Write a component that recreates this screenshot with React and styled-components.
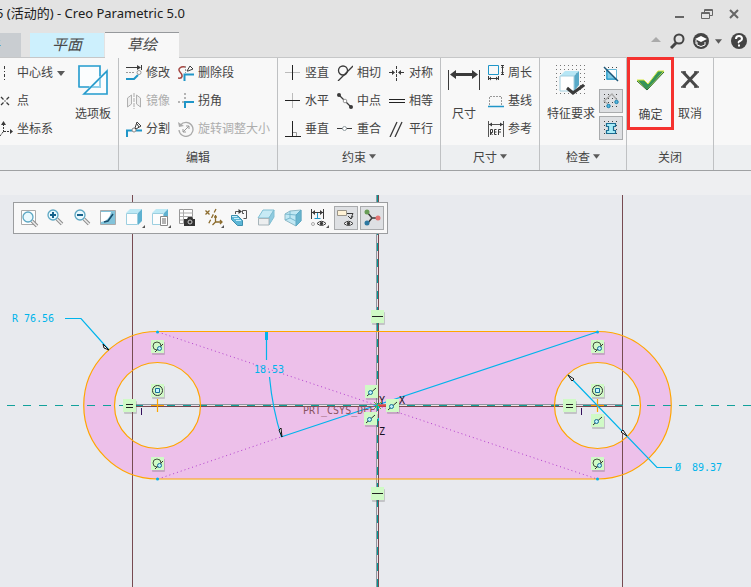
import React from "react";
import styled, { createGlobalStyle } from "styled-components";

const Global = createGlobalStyle`
  * { box-sizing: border-box; }
  body { margin: 0; overflow-x: hidden; background: #e8eaee; }
  body, button { font-family: "Noto Sans", "Noto Sans CJK SC", sans-serif; font-size: 12px; color: #444; }
  button { margin: 0; padding: 0; border: 0; background: none; cursor: pointer; }
  svg { display: block; flex: none; }
`;

const Page = styled.div`
  min-height: 100vh;
  display: flex;
  flex-direction: column;
  overflow: hidden;
`;
const Header = styled.header`
  background: #e3e3e3;
  border-bottom: 1px solid #c6c7c8;
`;
const TitleBar = styled.div`
  height: 28px;
  display: flex;
  align-items: center;
  justify-content: space-between;
  padding-right: 11px;
`;
const Title = styled.h1`
  margin: 0 0 0 -4px;
  font-size: 13px;
  line-height: 18px;
  padding-bottom: 2px;
  font-weight: 400;
  color: #202020;
  white-space: nowrap;
`;
const WindowButtons = styled.div`
  display: flex;
  gap: 15px;
`;
const TabBar = styled.div`
  height: 29px;
  display: flex;
  align-items: flex-end;
`;
const Tab = styled.button`
  width: 74px;
  height: 24px;
  padding-bottom: 3px;
  font-size: 15px;
  line-height: 20px;
  font-style: italic;
  color: #484848;
  background: #cdf0fd;
`;
const FileTab = styled(Tab)`
  width: 68px;
  margin-left: -47px;
  margin-right: 9px;
  font-size: 14px;
  font-style: normal;
  color: #2d80b5;
  background: #c9cdd1;
`;
const ActiveTab = styled(Tab)`
  width: 74px;
  height: 26px;
  margin-left: 1px;
  margin-bottom: -1px;
  border-top: 1px solid #96999c;
  background: #f8f8f8;
`;
const HeaderTools = styled.div`
  margin-left: auto;
  padding-right: 4px;
  height: 32px;
  display: flex;
  align-items: center;
`;
const ToolButton = styled.button`
  margin-left: ${(p) => p.$gap}px;
`;

const Ribbon = styled.div`
  display: flex;
  height: 113px;
  border-bottom: 1px solid #9fa1a3;
  background: #f8f8f8;
`;
const Group = styled.section`
  flex: ${(p) => (p.$width ? `0 0 ${p.$width}px` : "1 1 0")};
  display: flex;
  flex-direction: column;
  border-right: ${(p) => (p.$width ? "1px solid #bfc1c3" : "0")};
`;
const GroupBody = styled.div`
  flex: 1;
  display: flex;
  gap: ${(p) => p.$gap ?? 8}px;
  padding-top: 1px;
  padding-left: ${(p) => p.$pad ?? 7}px;
`;
const GroupLabel = styled.h2`
  margin: 0;
  height: 25px;
  padding-bottom: 2px;
  display: flex;
  align-items: center;
  justify-content: center;
  gap: 3px;
  font-size: 12px;
  font-weight: 400;
  background: #edeff1;
`;
const Column = styled.div`
  display: grid;
  grid-template-rows: repeat(3, 28px);
  justify-items: start;
`;
const SmallButton = styled.button`
  display: flex;
  align-items: center;
  gap: 4px;
  line-height: 18px;
  white-space: nowrap;
  color: ${(p) => (p.disabled ? "#adadad" : "#444")};
`;
const LargeButton = styled.button`
  height: 70px;
  display: flex;
  flex-direction: column;
  align-items: center;
  gap: 4px;
  line-height: 18px;
  white-space: nowrap;
`;
const LargeIcon = styled.span`
  height: 42px;
  display: flex;
  align-items: center;
`;
const ConfirmButton = styled(LargeButton)`
  width: 47px;
  height: 73px;
  border: 3px solid #f5322f;
  margin-top: -2px;
  position: relative;
  z-index: 1;
`;
const Toggle = styled.button`
  width: 24px;
  height: 24px;
  display: flex;
  align-items: center;
  justify-content: center;
  border: 1px solid ${(p) => (p["aria-pressed"] ? "#a9abad" : "transparent")};
  background: ${(p) => (p["aria-pressed"] ? "#dee0e3" : "transparent")};
`;
const ToggleColumn = styled.div`
  display: grid;
  grid-template-rows: repeat(3, 24px);
  row-gap: 3px;
  padding-top: 3px;
`;
const Strip = styled.div`
  height: 24px;
  background: #eeeff1;
`;
const Workspace = styled.main`
  flex: 1;
  position: relative;
  background: #e8eaee;
`;
const ViewToolbar = styled.div`
  position: absolute;
  top: 7px;
  left: 13px;
  width: 375px;
  height: 32px;
  padding: 0 3px;
  display: flex;
  align-items: center;
  justify-content: space-between;
  border: 1px solid #9b9d9f;
  background: #f8f8f8;
`;
const Drawing = styled.svg`
  width: 100%;
  height: auto;
  font-family: "DejaVu Sans Mono", monospace;
  font-size: 10px;
`;

const DK = "#3a3a3a";
const BL = "#2096c8";

const Arrow = ({ w = 7 }) => (
  <svg width={w} height="5" viewBox="0 0 8 5"><path d="M0 0h8L4 5z" fill="#5a5a5a" /></svg>
);
const Icon = ({ w = 16, h = 16, children }) => (
  <svg width={w} height={h} viewBox={`0 0 ${w} ${h}`} fill="none" stroke={DK} aria-hidden="true">{children}</svg>
);

const Dots = () => [0, 4, 8, 12].map((y) => <path key={y} d={`M1 ${y + 1.5}h14`} strokeDasharray="1 3" stroke="#444" />);

const icons = {
  centerline: <Icon w={13}><path d="M4.500 1v14" strokeDasharray="3 2 1 2" /></Icon>,
  point: <Icon w={13}><path d="M1 4l2.500 2.500M9 4L6.500 6.500M1 12l2.500-2.500M9 12L6.500 9.500" strokeWidth="1.300" /><path d="M4.500 8h1" strokeWidth="1.500" /></Icon>,
  csys: <Icon w={13}><path d="M3.500 11V2M4 10.500h8M3 11l-3 4" strokeDasharray="2 1" /><path d="M1 4l2.500-4L6 4zM10 8l3 2.500-3 2.500z" fill={DK} stroke="none" /></Icon>,
  modify: <Icon><path d="M0 2.500h13M15.500 0v5" /><path d="M11 0l4 2.500L11 5z" fill={DK} stroke="none" /><path d="M0 7.500h8" stroke="#999" strokeDasharray="2 1" /><path d="M0 14h8l4-4" stroke={BL} strokeWidth="2" /><circle cx="13" cy="7.500" r="2" stroke="#999" /></Icon>,
  mirror: <Icon><path d="M1.500 5l4-3v9l-4 3zM14.500 5l-4-3v9l4 3z" fill="#eee" stroke="#b0b0b0" /><path d="M8 0v16" stroke="#aaa" strokeDasharray="4 1" /></Icon>,
  divide: <Icon><path d="M1 16V9.500h5M10 9.500h6" stroke={BL} strokeWidth="2" /><circle cx="8" cy="9" r="2" stroke="#888" /><path d="M9 7l2-6 4 4-5 3zM11 3l2 3" fill="#fff" /></Icon>,
  deleteSeg: <Icon><path d="M0 13c5 1 5-3 2-6S3 1 7 2" stroke="#a34540" strokeWidth="1.500" /><path d="M6.500 16v-6.500H16" stroke={BL} strokeWidth="2" /><path d="M7.500 1v7" stroke="#999" strokeDasharray="2 1" /><path d="M9 6l3-5 3 3-5 2z" fill="#fff" /></Icon>,
  corner: <Icon><path d="M7 0v8M0 9h6" stroke="#b4b4b4" strokeWidth="2" strokeDasharray="2 2" /><path d="M7 15V9H16" stroke={BL} strokeWidth="2" /></Icon>,
  rotate: <Icon><path d="M2.500 4A7 7 0 1 1 1 9" stroke="#aaa" strokeWidth="1.300" /><path d="M0 1l1 5 5-1z" fill="#aaa" stroke="none" /><path d="M5 11l6-6M8 5h3v3M5 8v3h3" stroke="#999" /></Icon>,
  vertical: <Icon><path d="M0 7.500h15" stroke="#bbb" /><path d="M7.500 0v15" stroke="#222" /></Icon>,
  horizontal: <Icon><path d="M7.500 0v15" stroke="#bbb" /><path d="M0 7.500h15" stroke="#222" /></Icon>,
  perpendicular: <Icon><path d="M8 11.500h3.500V15" stroke="#999" /><path d="M7.500 0v15M0 15.500h16" stroke="#222" /></Icon>,
  tangent: <Icon><circle cx="6" cy="5.500" r="4.500" strokeWidth="1.300" /><path d="M1 16L16 1" strokeWidth="1.300" /></Icon>,
  midpoint: <Icon><path d="M2 2l12 12" strokeWidth="1.300" /><circle cx="2" cy="2" r="2" fill={DK} stroke="none" /><circle cx="14" cy="14" r="2" fill={DK} stroke="none" /><circle cx="8" cy="8" r="1.800" fill="#fff" stroke="#999" /></Icon>,
  coincident: <Icon><path d="M0 7.500h15" /><circle cx="7.500" cy="7.500" r="2" fill="#fff" stroke="#909ba0" /></Icon>,
  symmetric: <Icon><path d="M7.500 1v15" strokeDasharray="3 1" /><path d="M0 7.500h5M10 7.500h5" /><path d="M3 5l3 2.500L3 10zM12 5L9 7.500l3 2.500z" fill={DK} stroke="none" /></Icon>,
  equal: <Icon><path d="M0 6.500h16M0 9.500h16" stroke="#222" /></Icon>,
  parallel: <Icon><path d="M1 16L8 1M6 16l7-15" strokeWidth="1.300" /></Icon>,
  perimeter: <Icon><path d="M.500.500h10v9H.500z" stroke={BL} /><path d="M1 13.500h9M.500 11v4M10.500 11v4M14.500 1v8M13 .500h3M13 9.500h3" /><path d="M1 13.500l2-2v4zM10 13.500l-2-2v4zM14.500 1l-1.500 2h3zM14.500 9l-1.500-2h3z" fill={DK} stroke="none" /></Icon>,
  baseline: <Icon><path d="M1.500 12V3.500h12V12" stroke="#999" strokeDasharray="2 1" /><path d="M0 13.500h16" stroke={BL} strokeWidth="1.500" /></Icon>,
  reference: <Icon><path d="M.500 0v16M15.500 0v16M1 3.500h14" stroke="#555" /><path d="M1 3.500l3-2v4zM15 3.500l-3-2v4z" fill={DK} stroke="none" /><path d="M2.500 14V8.500h2v3h-2l2 2.500M8.500 8.500h-2v5h2M6.500 11h2M13 8.500h-2.500V14M10.500 11h2.500" /></Icon>,
  palette: <Icon w={30} h={30}><path d="M1 1h21v21H1zM29 6v23H6z" fill="#fbfdfe" stroke="#8fd0ea" strokeWidth="2" /><path d="M1 22V1h21v10M11 22H1M29 6v23H6z" stroke={BL} strokeWidth="1.200" /></Icon>,
  dimension: <Icon w={32} h={22}><path d="M.500 1v20M31.500 1v20" /><path d="M5 5.500h22" strokeWidth="3" /><path d="M2 5.500L8 1v9zM30 5.500L24 1v9z" fill={DK} stroke="none" /></Icon>,
  feature: (
    <Icon w={30} h={30}>
      {[0, 4, 8, 12, 16, 20, 24, 28].map((y) => <path key={y} d={`M0 ${y + 0.5}h30`} strokeDasharray="1 3" stroke="#777" />)}
      <path d="M4 11l5-5h14l-5 5z" fill="#b6e6f5" stroke="none" /><path d="M18 11l5-5v14l-5 6z" fill="#58a9c7" stroke="none" />
      <path d="M4 11h14v15H4z" fill="#fff" stroke="#a3cfdf" /><path d="M11 23l6 5 11-8" strokeWidth="3" />
    </Icon>
  ),
  check: <Icon w={30} h={22}><path d="M1 10h7l4 4L22 1h6L11 20z" fill="#35945a" stroke="#d6e840" /><path d="M1 11l10 9L28 2" stroke="#266b3e" /></Icon>,
  cancel: <Icon w={20} h={18}><path d="M3 1l14 15M17 1L3 16" strokeWidth="3" stroke="#484848" /><path d="M1 1h5M14 1h5M1 16h5M14 16h5" strokeWidth="1.500" stroke="#484848" /></Icon>,
  shade: <Icon><Dots /><path d="M3.500 3.500h10v10h-10z" fill="#fff" stroke="#68b8d6" /><path d="M4 4v9h9z" fill="#7ecbe5" stroke={BL} /><path d="M1 1l14 14" stroke="#1d5577" strokeWidth="1.500" /></Icon>,
  openEnds: <Icon><Dots /><path d="M5 11L1 8l8-7 5 6" stroke="#aaa" strokeWidth="1.300" /><circle cx="5.500" cy="13" r="1.700" fill="#55b8e0" stroke="#1d7faa" /><circle cx="13.500" cy="9" r="1.700" fill="#55b8e0" stroke="#1d7faa" /></Icon>,
  overlap: <Icon><Dots /><path d="M3.500 3.500h9v3h-2v4h2v3h-9v-3h2v-4h-2z" fill="#a7ebf7" stroke="#1b6b91" strokeWidth="1.200" /></Icon>,
};

const Lens = ({ x = 7, y = 7 }) => (
  <>
    <path d={`M${x + 4} ${y + 4}l5 5`} stroke="#8c8c8c" strokeWidth="3.500" /><path d={`M${x + 4} ${y + 4}l5 5`} stroke="#eee" strokeWidth="1.500" />
    <circle cx={x} cy={y} r="5" fill="#eaf9fe" stroke="#5da7c3" strokeWidth="1.300" />
  </>
);
const Cube = () => (
  <><path d="M1 5l4-4h12l-4 4z" fill="#bde9f5" stroke="none" /><path d="M13 5l4-4v12l-4 4z" fill="#5eb1d0" stroke="none" /><path d="M1.500 5.500h11v11h-11z" fill="#fdfdfd" stroke="#9ccfe0" /></>
);
const Corner = () => <path d="M20 17v3h-3z" fill="#555" stroke="none" />;
const Eye = () => (<><path d="M8 15.500q4.500-4.500 9 0q-4.500 4-9 0z" fill="#fff" /><circle cx="12.500" cy="15.500" r="1.700" fill={DK} stroke="none" /></>);

const viewTools = [
  ["重新调整", <><path d="M2.500 2.500h14v14h-14z" stroke="#aaa" fill="#fff" /><Lens x={9} y={9} /></>],
  ["放大", <><Lens x={8} /><path d="M5 7h6M8 4v6" stroke="#17628b" strokeWidth="2" /></>],
  ["缩小", <><Lens x={8} /><path d="M5 7h6" stroke="#17628b" strokeWidth="2" /></>],
  ["重画", <><path d="M2.500 2.500h15v14h-15z" fill="#82c3da" stroke="#aaa" /><path d="M3 4h10q-1 6-6 9l-4 1z" fill="#fff" stroke="none" /><path d="M15 6l-5 7-4 1" stroke="#174e6c" strokeWidth="1.500" /></>],
  ["显示样式", <><Cube /><Corner /></>],
  ["已保存方向", <><Cube /><path d="M9.500 8.500h7v9h-7z" fill="#fff" stroke="#888" /><path d="M11 11h4M11 13h4M11 15h4" stroke="#666" /><Corner /></>],
  ["视图管理器", <><path d="M2.500 1.500h13v14h-13z" fill="#fff" stroke="#999" /><path d="M3 5h13M3 8.500h13M3 12h13M6.500 1v15" stroke="#aaa" /><path d="M7 11h3l1-2h4l1 2h2v7H7z" fill="#333" stroke="none" /><circle cx="13" cy="14" r="2" stroke="#ccc" /></>],
  ["基准显示过滤器", <><g stroke="#8b6b2c" strokeWidth="1.300"><path d="M1.500 2.500l4 4M5.500 2.500l-4 4" /><path d="M12 1L4 17" strokeDasharray="4 2" /><path d="M11.500 7v7h6M11.500 14l-3 3M10 9h3M16 12l2 2-2 2" /></g><Corner /></>],
  ["注释方向", <><path d="M5.500 6V3.500h4M12.500 2.500h4v8h-3M12.500 2.500v3h1.500" stroke="#555" /><path d="M8.500 1l3.500 2.500L8.500 6z" fill={DK} stroke="none" /><path d="M1.500 7.500h6l5 5v5h-5l-6-6z" fill="#5db6d6" stroke="#3c8fae" /><path d="M2 8.500h5M4 10.500h5M6 12.500h5" stroke="#c9f0fc" /></>],
  ["剖面", <><path d="M2 10l5-8h11l-5 8z" fill="#c7eaf5" stroke="#80bfd3" /><path d="M13 10l5-8v7l-5 8z" fill="#8fcbe0" stroke="#80bfd3" /><path d="M2.500 10.500h10.500v6.500H2.500z" fill="#eceeef" stroke="#a8b5ba" /></>],
  ["透视图", <><path d="M2 6l5-3 11-1v11l-5 5-11-6z" fill="#c1e8f4" stroke="#90b9c6" /><path d="M13 7l5-5v11l-5 5z" fill="#68b5cf" stroke="#5eaac5" /><path d="M2 6l11 1M7 3v7l-5 2M7 10l6 3" stroke="#79b9cf" /></>],
  ["尺寸显示", <><path d="M2.500 1v10M14.500 1v10M3 4.500h11" /><path d="M3 4.500L6 2v5zM14 4.500L11 2v5z" fill={DK} stroke="none" /><path d="M8.500 5v5M5.500 10.500h6" stroke={BL} /><Eye /><circle cx="4" cy="16" r="1.500" stroke="#aaa" /><Corner /></>],
  ["注释显示", <><path d="M1.500 2.500h9v5h-9z" fill="#fff2d5" stroke="#9a958a" /><path d="M11 5.500h6L15 10M12 8l3 3 2-3" /><Eye /></>, true],
  ["旋转中心", <><path d="M5 4l5 6-5 6M10 10h6" strokeWidth="1.500" /><circle cx="5" cy="4" r="2.500" fill="#689c55" stroke="none" /><circle cx="5" cy="15" r="2.500" fill="#2d78a1" stroke="none" /><circle cx="16" cy="10" r="2.500" fill="#e47372" stroke="none" /></>, true],
];

const Cmd = ({ icon, children, arrow, disabled }) => (
  <SmallButton type="button" disabled={disabled}>{icons[icon]}<span>{children}</span>{arrow && <Arrow w={8} />}</SmallButton>
);
const Big = ({ icon, children, as: Button = LargeButton }) => (
  <Button type="button"><LargeIcon>{icons[icon]}</LargeIcon><span>{children}</span></Button>
);
const RibbonGroup = ({ width, pad, gap, label, menu, children }) => (
  <Group $width={width}>
    <GroupBody $pad={pad} $gap={gap}>{children}</GroupBody>
    <GroupLabel>{label}{menu && <Arrow />}</GroupLabel>
  </Group>
);

const ORANGE = "#ffa500";
const CYAN = "#00b4eb";
const PURPLE = "#b23fce";
const BROWN = "#774b51";
const OUTLINE = "M157.500 331.500H597.500a73.500 73.500 0 0 1 0 147.500H157.500a73.500 73.500 0 0 1 0-147.500z";

const marks = {
  line: <path d="M1 6.500h11" stroke="#222" shapeRendering="crispEdges" />,
  equal: <path d="M3 5.500h7M3 8.500h7" stroke="#222" />,
  tangent: <><circle cx="6" cy="6" r="4" stroke="#44543e" /><path d="M4 12l8-8" stroke="#333" /><circle cx="8.500" cy="8.500" r="2" fill="#bdeefa" stroke="#176f97" /></>,
  concentric: <><circle cx="6.500" cy="6.500" r="5" stroke="#333" /><path d="M4.500 4.500h4v4h-4z" fill="#c5f3ff" stroke="#176f97" /></>,
  mid: <><path d="M2 11l9-8" stroke="#333" /><circle cx="5.500" cy="7.500" r="2" fill="#bdeefa" stroke="#176f97" /></>,
};
const badges = [
  [371, 310, "line"], [371, 487, "line"], [151, 340, "tangent"], [151, 457, "tangent"], [591, 340, "tangent"], [591, 457, "tangent"],
  [151, 384, "concentric"], [591, 384, "concentric"], [123, 399, "equal"], [563, 399, "equal"],
  [365, 385, "mid"], [386, 399, "mid"], [364, 412, "mid"], [591, 414, "mid"],
];

function Sketch() {
  return (
    <Drawing viewBox="0 195 751 392" fill="none" role="img" aria-label="草绘">
      <path d={OUTLINE} fill="#edc0ea" />
      <circle cx="157.500" cy="405.500" r="43" fill="#e8eaee" />
      <circle cx="597.500" cy="405.500" r="43" fill="#e8eaee" />
      <g shapeRendering="crispEdges">
        <path d="M132.500 195V587M622.500 195V587M378.500 195V587M132 406.500H622" stroke={BROWN} />
        <path d="M376.500 195V587M136 404.500H622" stroke="#8f969e" />
        <path d="M377.500 195V587M136 405.500H622" stroke="#e9e3e9" />
        <path d="M377.500 195V587" stroke="#009c98" strokeDasharray="8 8" />
        <path d="M-9 405.500H751" stroke="#12a19b" strokeDasharray="8 8" />
      </g>
      <g stroke={ORANGE} strokeWidth="1.200">
        <path d={OUTLINE} />
        <circle cx="157.500" cy="405.500" r="43" /><circle cx="597.500" cy="405.500" r="43" />
        <path d="M157.500 399v13M151 405.500h13M597.500 399v13M591 405.500h13" />
      </g>
      <path d="M158 332L597 479M158 479l123-42" stroke={PURPLE} strokeDasharray="1 3" />
      <g stroke={CYAN} strokeWidth="1.200">
        <path d="M281 437L597 332M65 318.500H81L109 350M672 467.500H657L568 375M266.500 332v28M269.500 377q3 32 12 60" />
        <path d="M266.500 332v8" strokeWidth="3" />
      </g>
      <path d="M103 344l6 6-5-2zM281 428l1 9-3-7zM568 375l6 4-2 2zM627 436l-6-4 2-2z" stroke="#111" fill="#fff" />
      <g fill={CYAN}>
        <text x="12" y="322">R 76.56</text><text x="254" y="373">18.53</text>
        <text x="675" y="471">Ø</text><text x="692" y="471">89.37</text>
        <circle cx="157.500" cy="332" r="1.500" /><circle cx="157.500" cy="479" r="1.500" /><circle cx="597.500" cy="332" r="1.500" /><circle cx="597.500" cy="479" r="1.500" />
      </g>
      <text x="303" y="414" fill="#8a535e">PRT_CSYS_DEF</text>
      <path d="M374 402l7 7M381 402l-7 7" stroke="#4fc53d" /><path d="M378 405.500h10" stroke="#ef4444" strokeWidth="2" /><path d="M378.500 406v15" stroke="#00c6cb" strokeDasharray="3 9" />
      <g fill="#171020"><text x="379" y="404">Y</text><text x="399" y="404">X</text><text x="379" y="435">Z</text></g>
      <path d="M141.500 408v7M581.500 408v7" stroke="#33105c" />
      {badges.map(([x, y, kind]) => (
        <g key={`${x}-${y}`} transform={`translate(${x} ${y})`}>
          <rect x="1" y="2" width="13" height="13" rx="1" fill="#555" opacity=".25" />
          <rect width="13" height="13" fill="#d0fac6" />
          {marks[kind]}
        </g>
      ))}
    </Drawing>
  );
}

export default function App() {
  return (
    <Page>
      <Global />
      <Header>
        <TitleBar>
          <Title>5 (活动的) - Creo Parametric 5.0</Title>
          <WindowButtons>
            <button type="button" aria-label="最小化"><Icon w={12} h={12}><path d="M1 9h9" stroke="#666" strokeWidth="2" /></Icon></button>
            <button type="button" aria-label="还原"><Icon w={12} h={12}><path d="M3.500 4V1.500h8v6H9M.500 4.500h8v6h-8zM.500 5.500h8M3.500 2.500h8" stroke="#666" /></Icon></button>
            <button type="button" aria-label="关闭窗口"><Icon w={12} h={12}><path d="M2 2l8 8M10 2l-8 8" stroke="#666" strokeWidth="2" /></Icon></button>
          </WindowButtons>
        </TitleBar>
        <TabBar>
          <FileTab type="button">文件</FileTab>
          <Tab type="button">平面</Tab>
          <ActiveTab type="button">草绘</ActiveTab>
          <HeaderTools>
            <ToolButton type="button" aria-label="最小化功能区"><Icon w={12} h={12}><path d="M1 7l5-5 5 5z" fill="#aaa" stroke="none" /></Icon></ToolButton>
            <ToolButton type="button" aria-label="搜索" $gap={8}><Icon><circle cx="9" cy="6" r="4.500" stroke="#444" strokeWidth="2" /><path d="M6 10l-5 5" stroke="#444" strokeWidth="3" /></Icon></ToolButton>
            <ToolButton type="button" aria-label="学习中心" $gap={7}><Icon><circle cx="8" cy="8" r="8" fill="#444" stroke="none" /><path d="M2 6l6-3 6 3-6 3z" fill="#fff" stroke="none" /><path d="M4 9v3q4 3 8 0V9M3 7v4" stroke="#fff" /></Icon></ToolButton>
            <ToolButton type="button" aria-label="更多" $gap={6}><Arrow /></ToolButton>
            <ToolButton type="button" aria-label="帮助" $gap={9}><Icon><circle cx="8" cy="8" r="8" fill="#444" stroke="none" /><path d="M5 6q0-3 3-3t3 3q0 1-2 2t-1 2M8 11.500v2" stroke="#fff" strokeWidth="2" /></Icon></ToolButton>
          </HeaderTools>
        </TabBar>
      </Header>

      <Ribbon>
        <RibbonGroup width={119} pad={0} gap={10}>
          <Column>
            <Cmd icon="centerline" arrow>中心线</Cmd>
            <Cmd icon="point">点</Cmd>
            <Cmd icon="csys">坐标系</Cmd>
          </Column>
          <Big icon="palette">选项板</Big>
        </RibbonGroup>
        <RibbonGroup width={159} label="编辑">
          <Column>
            <Cmd icon="modify">修改</Cmd><Cmd icon="mirror" disabled>镜像</Cmd><Cmd icon="divide">分割</Cmd>
          </Column>
          <Column>
            <Cmd icon="deleteSeg">删除段</Cmd><Cmd icon="corner">拐角</Cmd><Cmd icon="rotate" disabled>旋转调整大小</Cmd>
          </Column>
        </RibbonGroup>
        <RibbonGroup width={163} label="约束" menu>
          <Column><Cmd icon="vertical">竖直</Cmd><Cmd icon="horizontal">水平</Cmd><Cmd icon="perpendicular">垂直</Cmd></Column>
          <Column><Cmd icon="tangent">相切</Cmd><Cmd icon="midpoint">中点</Cmd><Cmd icon="coincident">重合</Cmd></Column>
          <Column><Cmd icon="symmetric">对称</Cmd><Cmd icon="equal">相等</Cmd><Cmd icon="parallel">平行</Cmd></Column>
        </RibbonGroup>
        <RibbonGroup width={99} label="尺寸" menu>
          <Big icon="dimension">尺寸</Big>
          <Column><Cmd icon="perimeter">周长</Cmd><Cmd icon="baseline">基线</Cmd><Cmd icon="reference">参考</Cmd></Column>
        </RibbonGroup>
        <RibbonGroup width={87} gap={4} label="检查" menu>
          <Big icon="feature">特征要求</Big>
          <ToggleColumn>
            <Toggle type="button" aria-label="着色封闭环" aria-pressed={false}>{icons.shade}</Toggle>
            <Toggle type="button" aria-label="突出显示开放端" aria-pressed>{icons.openEnds}</Toggle>
            <Toggle type="button" aria-label="重叠几何" aria-pressed>{icons.overlap}</Toggle>
          </ToggleColumn>
        </RibbonGroup>
        <RibbonGroup width={87} pad={0} gap={4} label="关闭">
          <Big icon="check" as={ConfirmButton}>确定</Big>
          <Big icon="cancel">取消</Big>
        </RibbonGroup>
        <RibbonGroup />
      </Ribbon>
      <Strip />
      <Workspace>
        <Sketch />
        <ViewToolbar role="toolbar" aria-label="视图">
          {viewTools.map(([name, art, pressed]) => (
            <Toggle key={name} type="button" aria-label={name} aria-pressed={!!pressed}><Icon w={20} h={20}>{art}</Icon></Toggle>
          ))}
        </ViewToolbar>
      </Workspace>
    </Page>
  );
}
